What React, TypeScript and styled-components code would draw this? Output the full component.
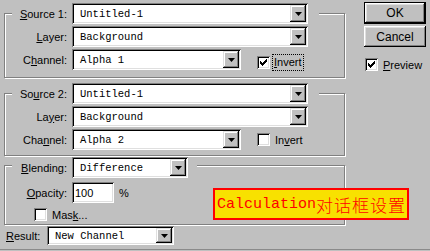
import React from "react";
import styled, { createGlobalStyle } from "styled-components";

const Global = createGlobalStyle`
  html, body { margin: 0; padding: 0; background: #c0c0c0; }
  body { font-family: "Liberation Sans", Arial, sans-serif; font-size: 11px; color: #000; }
  u { text-decoration: underline; text-underline-offset: 1px; }
`;

const Root = styled.div`
  position: relative;
  width: 430px;
  height: 249px;
  border-bottom: 1px solid #8a8a8a;
  display: flex;
  background: #c0c0c0;
  overflow: hidden;
`;

const LeftCol = styled.div`
  width: 350px;
  display: flex;
  flex-direction: column;
`;

const RightCol = styled.div`
  margin-left: 14px;
  display: flex;
  flex-direction: column;
  width: 62px;
`;

const Group = styled.div<{ $top: number; $bottom: number }>`
  box-sizing: border-box;
  margin-left: 4px;
  margin-top: ${(p) => p.$top}px;
  width: 341px;
  border: 1px solid #808080;
  box-shadow: inset 1px 1px 0 #fff, 1px 1px 0 #fff;
  padding-bottom: ${(p) => p.$bottom}px;
  display: flex;
  flex-direction: column;
`;

const Row = styled.div<{ $mt?: number }>`
  display: flex;
  align-items: center;
  padding-left: 7px;
  margin-top: ${(p) => p.$mt ?? 2}px;
`;

const HeadRow = styled.div<{ $mt: number; $pr: number }>`
  display: flex;
  align-items: center;
  align-self: flex-start;
  margin-left: 7px;
  margin-top: ${(p) => p.$mt}px;
  padding-right: ${(p) => p.$pr}px;
  background: #c0c0c0;
`;

const Label = styled.span`
  width: 55px;
  margin-right: 5px;
  text-align: right;
  white-space: nowrap;
`;

const Field = styled.div<{ $w: number; $h?: number }>`
  box-sizing: border-box;
  width: ${(p) => p.$w}px;
  height: ${(p) => p.$h ?? 21}px;
  background: #fff;
  box-shadow: inset 1px 1px 0 #808080, inset -1px -1px 0 #fff,
    inset 2px 2px 0 #000, inset -2px -2px 0 #dfdfdf;
  padding: 2px;
  display: flex;
  align-items: stretch;
`;

const FieldText = styled.span`
  flex: 1;
  padding-left: 6px;
  display: flex;
  align-items: center;
  font-family: "Liberation Mono", "DejaVu Sans Mono", monospace;
  font-size: 10.5px;
  white-space: nowrap;
`;

const InputText = styled.span`
  padding-left: 1px;
  display: flex;
  align-items: center;
  font-family: "Liberation Sans", Arial, sans-serif;
  font-size: 11px;
`;

const ArrowBtn = styled.div`
  box-sizing: border-box;
  width: 16px;
  background: #c0c0c0;
  box-shadow: inset -1px -1px 0 #000, inset 1px 1px 0 #dfdfdf,
    inset -2px -2px 0 #808080, inset 2px 2px 0 #fff;
  display: flex;
  align-items: center;
  justify-content: center;
`;

const Arrow = () => (
  <svg width="7" height="4" viewBox="0 0 7 4">
    <path d="M0 0h7L3.5 4z" fill="#000" />
  </svg>
);

const Combo = ({ w, h, text }: { w: number; h?: number; text: string }) => (
  <Field $w={w} $h={h}>
    <FieldText>{text}</FieldText>
    <ArrowBtn>
      <Arrow />
    </ArrowBtn>
  </Field>
);

const Box = styled.span`
  box-sizing: border-box;
  width: 13px;
  height: 13px;
  flex: none;
  background: #fff;
  box-shadow: inset 1px 1px 0 #808080, inset -1px -1px 0 #fff,
    inset 2px 2px 0 #000, inset -2px -2px 0 #dfdfdf;
  display: flex;
  align-items: center;
  justify-content: center;
`;

const Check = ({ on }: { on?: boolean }) => (
  <Box>
    {on && (
      <svg width="7" height="7" viewBox="0 0 7 7">
        <path
          d="M0 2h1v1h1v1h1V3h1V2h1V1h1V0h1v3H6v1H5v1H4v1H3v1H2V6H1V5H0z"
          fill="#000"
        />
      </svg>
    )}
  </Box>
);

const CheckRow = styled.div<{ $ml: number; $gap: number; $dy?: number }>`
  display: flex;
  align-items: center;
  margin-left: ${(p) => p.$ml}px;
  gap: ${(p) => p.$gap}px;
  position: relative;
  top: ${(p) => p.$dy ?? 0}px;
`;

const Focus = styled.span`
  outline: 1px dotted #000;
  outline-offset: 0;
  padding: 1px 1px 2px 1px;
`;

const Percent = styled.span`
  margin-left: 5px;
`;

const ResultRow = styled.div`
  display: flex;
  align-items: center;
  padding-left: 6px;
  margin-top: 1px;
`;

const ResultLabel = styled.span`
  width: 36px;
  margin-right: 5px;
`;

const Button = styled.div<{ $def?: boolean; $mt: number; $h: number }>`
  box-sizing: border-box;
  margin-top: ${(p) => p.$mt}px;
  height: ${(p) => p.$h}px;
  width: 62px;
  display: flex;
  align-items: center;
  justify-content: center;
  background: #c0c0c0;
  font-size: 12px;
  border: ${(p) => (p.$def ? "1px solid #000" : "none")};
  box-shadow: inset -1px -1px 0 #000, inset 1px 1px 0 #fff,
    inset -2px -2px 0 #808080, inset 2px 2px 0 #dfdfdf;
`;

const Note = styled.div`
  position: absolute;
  left: 213px;
  top: 188px;
  box-sizing: border-box;
  width: 196px;
  height: 32px;
  border: 2px solid #ff0000;
  background: #f8e100;
  color: #ff0000;
  display: flex;
  align-items: center;
  padding-left: 2px;
  white-space: nowrap;
`;

const NoteLatin = styled.span`
  font-family: "Liberation Mono", "DejaVu Sans Mono", monospace;
  font-size: 15px;
`;

const NoteCjk = styled.span`
  font-family: "Noto Sans CJK SC", sans-serif;
  font-size: 17px;
  font-weight: 300;
  letter-spacing: 1px;
`;

export default function App() {
  return (
    <>
      <Global />
      <Root>
        <LeftCol>
          <Group $top={13} $bottom={7}>
            <HeadRow $mt={-11} $pr={11}>
              <Label>
                <u>S</u>ource 1:
              </Label>
              <Combo w={236} text="Untitled-1" />
            </HeadRow>
            <Row>
              <Label>
                <u>L</u>ayer:
              </Label>
              <Combo w={236} text="Background" />
            </Row>
            <Row>
              <Label>
                C<u>h</u>annel:
              </Label>
              <Combo w={169} text="Alpha 1" />
              <CheckRow $ml={16} $gap={3} $dy={3}>
                <Check on />
                <Focus>
                  <u>I</u>nvert
                </Focus>
              </CheckRow>
            </Row>
          </Group>

          <Group $top={15} $bottom={5}>
            <HeadRow $mt={-11} $pr={11}>
              <Label>
                So<u>u</u>rce 2:
              </Label>
              <Combo w={236} text="Untitled-1" />
            </HeadRow>
            <Row>
              <Label>
                La<u>y</u>er:
              </Label>
              <Combo w={236} text="Background" />
            </Row>
            <Row>
              <Label>
                Cha<u>n</u>nel:
              </Label>
              <Combo w={169} text="Alpha 2" />
              <CheckRow $ml={16} $gap={5}>
                <Check />
                <span>
                  In<u>v</u>ert
                </span>
              </CheckRow>
            </Row>
          </Group>

          <Group $top={9} $bottom={3}>
            <HeadRow $mt={-9} $pr={9}>
              <Label>
                <u>B</u>lending:
              </Label>
              <Combo w={116} text="Difference" />
            </HeadRow>
            <Row $mt={4}>
              <Label>
                <u>O</u>pacity:
              </Label>
              <Field $w={42}>
                <InputText>100</InputText>
              </Field>
              <Percent>%</Percent>
            </Row>
            <Row $mt={5}>
              <CheckRow $ml={22} $gap={5}>
                <Check />
                <span>
                  Mas<u>k</u>...
                </span>
              </CheckRow>
            </Row>
          </Group>

          <ResultRow>
            <ResultLabel>
              <u>R</u>esult:
            </ResultLabel>
            <Combo w={127} h={19} text="New Channel" />
          </ResultRow>
        </LeftCol>

        <RightCol>
          <Button $def $mt={2} $h={22}>
            OK
          </Button>
          <Button $mt={2} $h={21}>
            Cancel
          </Button>
          <CheckRow $ml={1} $gap={5} style={{ marginTop: 11 }}>
            <Check on />
            <span>
              <u>P</u>review
            </span>
          </CheckRow>
        </RightCol>

        <Note>
          <NoteLatin>Calculation</NoteLatin>
          <NoteCjk>对话框设置</NoteCjk>
        </Note>
      </Root>
    </>
  );
}
